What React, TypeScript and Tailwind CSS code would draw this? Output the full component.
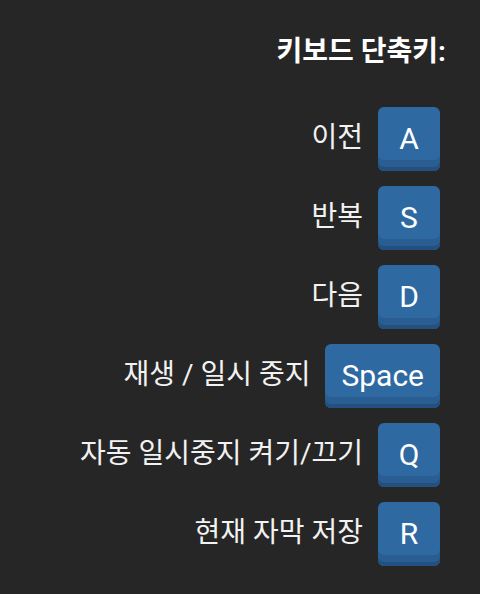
import React from "react";

const rows: { label: string; key: string }[] = [
  { label: "이전", key: "A" },
  { label: "반복", key: "S" },
  { label: "다음", key: "D" },
  { label: "재생 / 일시 중지", key: "Space" },
  { label: "자동 일시중지 켜기/끄기", key: "Q" },
  { label: "현재 자막 저장", key: "R" },
];

export default function App() {
  return (
    <div
      className="w-[480px] h-[594px] bg-[#262626] text-white flex flex-col items-end pr-[34px] pt-[32px]"
      style={{ fontFamily: "Roboto, 'Noto Sans CJK KR', sans-serif" }}
    >
      <div className="text-[28px] font-bold leading-[40px] text-white">키보드 단축키:</div>
      <div className="flex flex-col items-end gap-[15px] mt-[35px] mr-[6px]">
        {rows.map((r) => (
          <div key={r.key} className="flex items-center h-[64px]">
            <span className="text-[28px] leading-[40px] text-[#f2f2f2] mb-[2px]">{r.label}</span>
            <div
              className={`ml-[15px] h-[64px] ${r.key === "Space" ? "px-[16px]" : "w-[62px]"} flex items-center justify-center rounded-[6px] bg-[#2e69a2] shadow-[inset_0_-4px_0_#24507f,inset_0_-11px_0_#2a5d91] text-[30px] text-white leading-none`}
            >
              {r.key}
            </div>
          </div>
        ))}
      </div>
    </div>
  );
}
